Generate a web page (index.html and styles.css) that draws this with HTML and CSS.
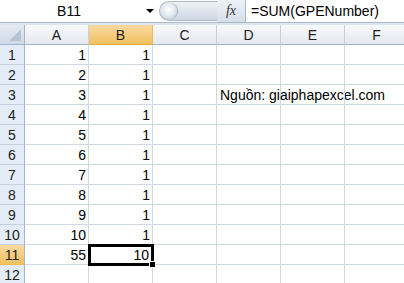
FILE: index.html
```html
<!DOCTYPE html>
<html>
<head>
<meta charset="utf-8">
<link rel="stylesheet" href="styles.css">
</head>
<body>
<div class="bar">
  <div class="namebox"><span class="name">B11</span><span class="arrow"></span></div>
  <div class="pill"><span class="knob"></span></div>
  <div class="fx">fx</div>
  <div class="formula">=SUM(GPENumber)</div>
</div>
<div class="sheet">
  <div class="corner"><span class="tri"></span></div>
  <div class="ch">A</div><div class="ch sel">B</div><div class="ch">C</div><div class="ch">D</div><div class="ch">E</div><div class="ch">F</div>

  <div class="rh">1</div><div class="c n">1</div><div class="c n">1</div><div class="c"></div><div class="c"></div><div class="c"></div><div class="c"></div>
  <div class="rh">2</div><div class="c n">2</div><div class="c n">1</div><div class="c"></div><div class="c"></div><div class="c"></div><div class="c"></div>
  <div class="rh">3</div><div class="c n">3</div><div class="c n">1</div><div class="c"></div><div class="c t">Nguồn: giaiphapexcel.com</div><div class="c"></div><div class="c"></div>
  <div class="rh">4</div><div class="c n">4</div><div class="c n">1</div><div class="c"></div><div class="c"></div><div class="c"></div><div class="c"></div>
  <div class="rh">5</div><div class="c n">5</div><div class="c n">1</div><div class="c"></div><div class="c"></div><div class="c"></div><div class="c"></div>
  <div class="rh">6</div><div class="c n">6</div><div class="c n">1</div><div class="c"></div><div class="c"></div><div class="c"></div><div class="c"></div>
  <div class="rh">7</div><div class="c n">7</div><div class="c n">1</div><div class="c"></div><div class="c"></div><div class="c"></div><div class="c"></div>
  <div class="rh">8</div><div class="c n">8</div><div class="c n">1</div><div class="c"></div><div class="c"></div><div class="c"></div><div class="c"></div>
  <div class="rh">9</div><div class="c n">9</div><div class="c n">1</div><div class="c"></div><div class="c"></div><div class="c"></div><div class="c"></div>
  <div class="rh">10</div><div class="c n">10</div><div class="c n">1</div><div class="c"></div><div class="c"></div><div class="c"></div><div class="c"></div>
  <div class="rh sel">11</div><div class="c n">55</div><div class="c n active">10<span class="handle"></span></div><div class="c"></div><div class="c"></div><div class="c"></div><div class="c"></div>
  <div class="rh">12</div><div class="c"></div><div class="c"></div><div class="c"></div><div class="c"></div><div class="c"></div><div class="c"></div>
</div>
</body>
</html>
```

FILE: styles.css
```css
html, body {
  margin: 0;
  padding: 0;
  width: 404px;
  height: 283px;
  overflow: hidden;
  background: #ffffff;
  font-family: "Liberation Sans", Arial, sans-serif;
  color: #000;
}
.bar {
  display: flex;
  height: 22px;
  border-bottom: 1px solid #a9b8cc;
  background: #ffffff;
  margin-bottom: 2px;
  box-shadow: 0 2px 0 #dce4ee;
}
.namebox {
  width: 159px;
  display: flex;
  align-items: center;
}
.name {
  flex: 1;
  text-align: center;
  font-size: 14px;
  padding-right: 8px;
}
.arrow {
  width: 0;
  height: 0;
  border-left: 4px solid transparent;
  border-right: 4px solid transparent;
  border-top: 4px solid #000;
  margin-right: 5px;
}
.pill {
  width: 58px;
  height: 20px;
  margin-top: 1px;
  border-radius: 10px 0 0 10px;
  background: linear-gradient(#eef2f7, #cdd7e4);
  border: 1px solid #aab6c6;
  border-right: none;
  box-sizing: border-box;
  position: relative;
}
.knob {
  position: absolute;
  left: 1px;
  top: 1px;
  width: 16px;
  height: 16px;
  border-radius: 50%;
  background: radial-gradient(circle at 45% 40%, #ffffff 0%, #e6ebf2 45%, #b9c5d4 100%);
  box-shadow: 1px 0 1px #9aa8ba;
}
.fx {
  width: 28px;
  background: linear-gradient(#eef2f7, #d5dde8);
  font-family: "Liberation Serif", serif;
  font-style: italic;
  font-size: 14px;
  color: #333;
  text-align: center;
  line-height: 22px;
  border-right: 1px solid #a9b8cc;
}
.formula {
  flex: 1;
  font-size: 14px;
  line-height: 22px;
  padding-left: 5px;
}
.sheet {
  display: grid;
  grid-template-columns: 25px repeat(6, 64px);
  grid-auto-rows: 20px;
}
.corner {
  background: linear-gradient(#e4ebf3, #d0dae6);
  border-right: 1px solid #9eb6ce;
  border-bottom: 1px solid #9eb6ce;
  box-sizing: border-box;
  position: relative;
}
.tri {
  position: absolute;
  right: 3px;
  bottom: 3px;
  width: 0;
  height: 0;
  border-left: 12px solid transparent;
  border-bottom: 12px solid #b6c5d6;
}
.ch {
  background: linear-gradient(#f8f9fb, #e4e8ee);
  border-right: 1px solid #c5d1de;
  border-bottom: 1px solid #9eb6ce;
  box-sizing: border-box;
  text-align: center;
  font-size: 14px;
  line-height: 20px;
  color: #222;
}
.ch.sel {
  background: linear-gradient(#f9d99f, #f1c15f);
  border-right-color: #f2b852;
  border-bottom-color: #f2a93a;
}
.rh {
  background: #e4ecf7;
  border-right: 1px solid #9eb6ce;
  border-bottom: 1px solid #c5d1de;
  box-sizing: border-box;
  text-align: center;
  font-size: 14px;
  line-height: 20px;
  color: #222;
}
.rh.sel {
  background: linear-gradient(#f9d99f, #f1c15f);
  border-bottom-color: #f2b852;
}
.c {
  border-right: 1px solid #d0d7e5;
  border-bottom: 1px solid #d0d7e5;
  box-sizing: border-box;
  font-size: 14px;
  line-height: 20px;
  white-space: nowrap;
  position: relative;
}
.n {
  text-align: right;
  padding-right: 2px;
}
.t {
  padding-left: 3px;
}
.active {
  outline: 3px solid #000;
  outline-offset: -2px;
  padding-right: 3px;
  z-index: 1;
}
.handle {
  position: absolute;
  right: -4px;
  bottom: -4px;
  width: 5px;
  height: 5px;
  background: #000;
  border: 1px solid #fff;
}
```
